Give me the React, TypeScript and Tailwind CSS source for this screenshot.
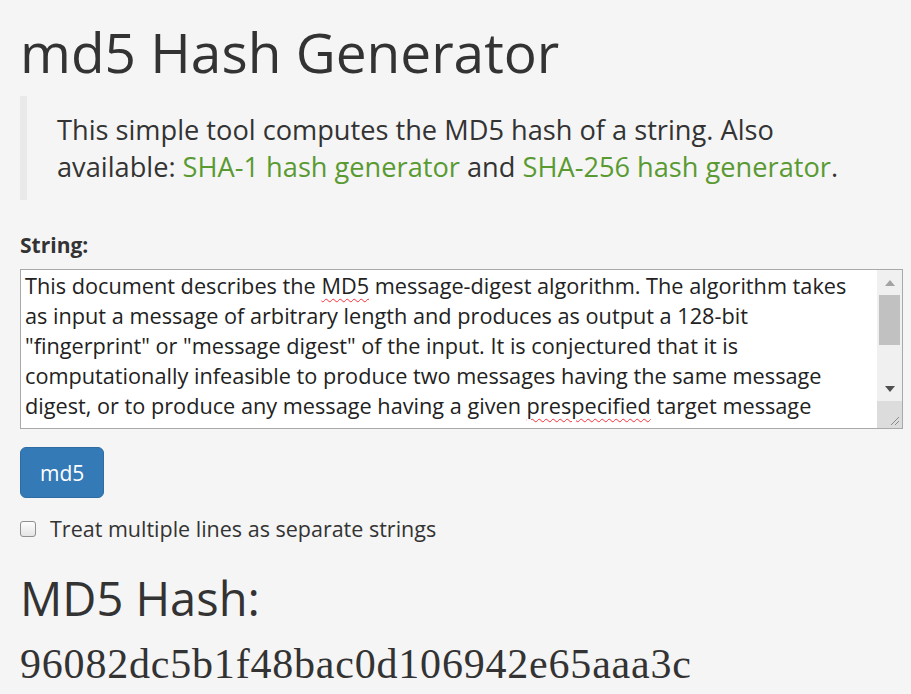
import React from "react";

const sans = "font-['Open_Sans','Noto_Sans',sans-serif]";

const ScrollBar = () => {
  return (
    <div className="flex w-[25px] flex-col bg-[#f0f0f0]">
      <div className="flex h-[25px] items-center justify-center">
        <svg width="10" height="6" viewBox="0 0 10 6">
          <path d="M0 6 L5 0 L10 6 Z" fill="#a3a3a3" />
        </svg>
      </div>
      <div className="mx-[2px] h-[50px] bg-[#c1c1c1]" />
      <div className="flex-1" />
      <div className="flex h-[25px] items-center justify-center">
        <svg width="10" height="6" viewBox="0 0 10 6">
          <path d="M0 0 L10 0 L5 6 Z" fill="#505050" />
        </svg>
      </div>
      <div className="flex h-[27px] items-end justify-end bg-[#dcdcdc] p-[2px]">
        <svg width="12" height="12" viewBox="0 0 12 12">
          <path d="M11 3 L3 11 M11 7 L7 11" stroke="#8a8a8a" strokeWidth="1" />
        </svg>
      </div>
    </div>
  );
};

export default function App() {
  return (
    <div className={`min-h-screen bg-[#f5f5f5] px-5 text-[#333] ${sans}`}>
      <h1 className="pt-[22px] text-[55px] leading-[59px] font-normal">
        md5 Hash Generator
      </h1>

      <blockquote className="mt-[15px] w-[851px] border-l-[7px] border-[#e9e9e9] py-[15px] pl-[30px] pr-5 text-[27.2px] leading-[37px]">
        This simple tool computes the MD5 hash of a string. Also available:{" "}
        <a href="#" className="text-[#5a9a32]">
          SHA-1 hash generator
        </a>{" "}
        and{" "}
        <a href="#" className="text-[#5a9a32]">
          SHA-256 hash generator
        </a>
        .
      </blockquote>

      <div className="mt-[30px]">
        <label className="block text-[21px] leading-[30px] font-bold">String:</label>
        <div className="mt-[9px] flex h-[160px] w-[883px] overflow-hidden border border-[#a9a9a9] bg-white">
          <div className="flex-1 overflow-hidden pl-[4px] pr-[8px] pt-[1px] text-[21.7px] leading-[30px] text-[#222]">
            This document describes the{" "}
            <span className="underline decoration-red-500 decoration-wavy decoration-1 underline-offset-4">MD5</span>{" "}
            message-digest algorithm. The algorithm takes as input a message of arbitrary length and produces as output a 128-bit "fingerprint" or "message digest" of the input. It is conjectured that it is computationally infeasible to produce two messages having the same message digest, or to produce any message having a given{" "}
            <span className="underline decoration-red-500 decoration-wavy decoration-1 underline-offset-4">prespecified</span>{" "}
            target message digest. The MD5 algorithm is intended for digital signature applications.
          </div>
          <ScrollBar />
        </div>
      </div>

      <button className="mt-[18px] flex h-[51px] items-center rounded-[6px] border border-[#2e6da4] bg-[#337ab7] px-[19px] text-[21px] leading-[30px] text-white">
        md5
      </button>

      <label className="mt-[16px] flex items-center gap-[14px] text-[21.5px] leading-[30px]">
        <input
          type="checkbox"
          className="h-4 w-4 appearance-none rounded-[3px] border border-[#8f8f8f] bg-gradient-to-b from-[#fdfdfd] to-[#e4e4e4]"
        />
        Treat multiple lines as separate strings
      </label>

      <h2 className="mt-[29px] text-[47px] leading-[50px] font-normal">MD5 Hash:</h2>
      <p className="mt-[17px] font-['Liberation_Serif',serif] text-[42px] leading-[48px] tracking-[0.8px] text-[#333]">
        96082dc5b1f48bac0d106942e65aaa3c
      </p>
    </div>
  );
}
